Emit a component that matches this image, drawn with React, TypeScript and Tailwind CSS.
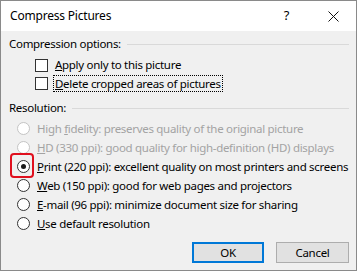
import React from "react";

const font = { fontFamily: '"Noto Sans", "Liberation Sans", sans-serif' };

function GroupLabel({ text }: { text: string }) {
    return (
        <div className="flex items-center h-[16px] pl-[8px] pr-[7px]">
            <span className="whitespace-nowrap">{text}</span>
            <div className="flex-1 h-px bg-[#d9d9d9] ml-[6px]" />
        </div>
    );
}

function Checkbox({ children, focused }: { children: React.ReactNode; focused?: boolean }) {
    return (
        <div className="flex items-center h-[18px] pl-[34px]">
            <div className="w-[13px] h-[13px] border border-[#333] bg-white shrink-0" />
            <span
                className={
                    focused
                        ? "ml-[5px] px-[1px] leading-[15px] border border-dotted border-black"
                        : "ml-[7px]"
                }
            >
                {children}
            </span>
        </div>
    );
}

function Radio({
    children,
    checked,
    disabled,
}: {
    children: React.ReactNode;
    checked?: boolean;
    disabled?: boolean;
}) {
    return (
        <div className="flex items-center h-[19px] pl-[16px]">
            <div
                className={
                    "w-[13px] h-[13px] rounded-full border bg-white shrink-0 flex items-center justify-center " +
                    (disabled ? "border-[#c4c4c4]" : "border-[#333]")
                }
            >
                {checked && <div className="w-[5px] h-[5px] rounded-full bg-[#1a1a1a]" />}
            </div>
            <span className={"ml-[7px] whitespace-nowrap " + (disabled ? "text-[#a3a3a3]" : "text-black")}>
                {children}
            </span>
        </div>
    );
}

export default function App() {
    return (
        <div
            className="w-[357px] h-[271px] border border-[#8a8a8a] flex flex-col text-[11.5px] tracking-[-0.3px] text-black overflow-hidden"
            style={font}
        >
            {/* Title bar */}
            <div className="h-[30px] bg-white flex items-center pl-[9px] shrink-0">
                <span className="text-[12px] tracking-[-0.2px]">Compress Pictures</span>
                <div className="flex-1" />
                <span className="text-[13px] mr-[39px]">?</span>
                <svg width="11" height="11" viewBox="0 0 11 11" className="mr-[17px]">
                    <path d="M0.5 0.5 L10.5 10.5 M10.5 0.5 L0.5 10.5" stroke="#111" strokeWidth="1" />
                </svg>
            </div>

            {/* Body */}
            <div className="flex-1 bg-[#f0f0f0] relative pt-[5px]">
                <GroupLabel text="Compression options:" />
                <div className="mt-[4px]">
                    <Checkbox>
                        <u>A</u>pply only to this picture
                    </Checkbox>
                    <Checkbox focused>
                        <u>D</u>elete cropped areas of pictures
                    </Checkbox>
                </div>

                <div className="mt-[8px]">
                    <GroupLabel text="Resolution:" />
                </div>
                <div className="mt-[3px]">
                    <Radio disabled>
                        High <u>f</u>idelity: preserves quality of the original picture
                    </Radio>
                    <Radio disabled>
                        <u>H</u>D (330 ppi): good quality for high-definition (HD) displays
                    </Radio>
                    <Radio checked>
                        <u>P</u>rint (220 ppi): excellent quality on most printers and screens
                    </Radio>
                    <Radio>
                        <u>W</u>eb (150 ppi): good for web pages and projectors
                    </Radio>
                    <Radio>
                        <u>E</u>-mail (96 ppi): minimize document size for sharing
                    </Radio>
                    <Radio>
                        <u>U</u>se default resolution
                    </Radio>
                </div>

                <div className="flex justify-end gap-[12px] pr-[7px] mt-[9px]">
                    <button className="w-[72px] h-[21px] bg-[#e1e1e1] border-2 border-[#0078d7]">OK</button>
                    <button className="w-[73px] h-[21px] bg-[#e1e1e1] border border-[#adadad]">Cancel</button>
                </div>

                {/* highlight box around the selected option */}
                <div className="absolute left-[9px] top-[122px] w-[24px] h-[25px] border-2 border-[#e0101e] rounded-[4px]" />
            </div>
        </div>
    );
}
